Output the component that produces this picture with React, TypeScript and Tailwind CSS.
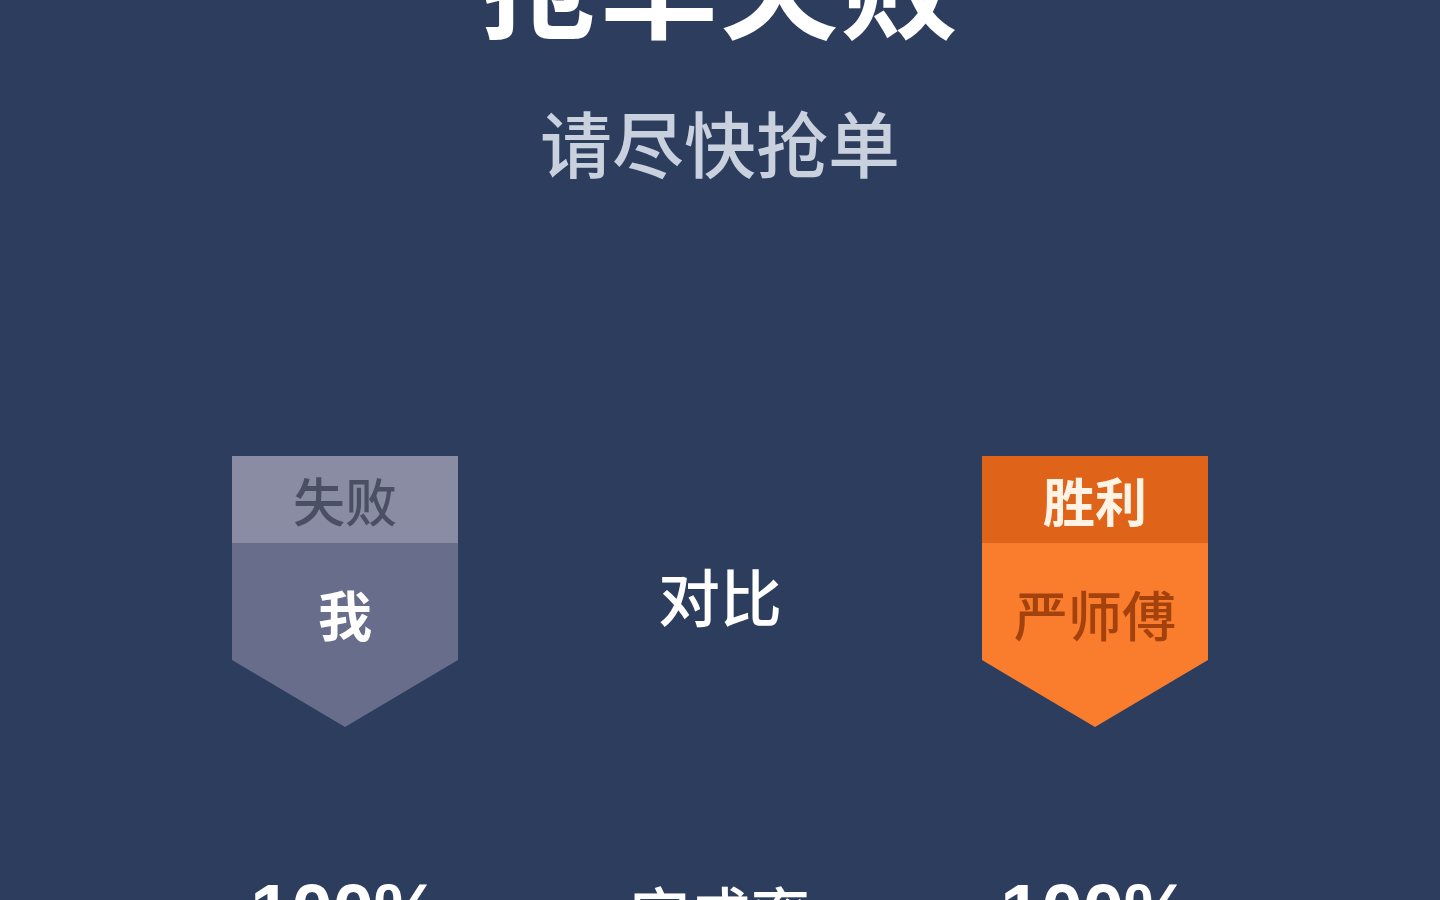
const FONT = '[font-family:"Noto_Sans_CJK_SC","Noto_Sans",sans-serif]'

interface BadgeProps {
  label: string
  name: string
  headClass: string
  bodyClass: string
  labelClass: string
  nameClass: string
}

function Badge({ label, name, headClass, bodyClass, labelClass, nameClass }: BadgeProps) {
  return (
    <div className="w-[226px] h-[271px] flex flex-col [clip-path:polygon(0_0,100%_0,100%_75.3%,50%_100%,0_75.3%)]">
      <div className={`h-[87px] flex items-center justify-center ${headClass}`}>
        <span className={`text-[52px] leading-none ${labelClass}`}>{label}</span>
      </div>
      <div className={`flex-1 flex justify-center pt-[44px] ${bodyClass}`}>
        <span className={`text-[54px] leading-none ${nameClass}`}>{name}</span>
      </div>
    </div>
  )
}

export default function App() {
  return (
    <div className={`h-[900px] w-full overflow-hidden bg-[#2d3d5e] flex flex-col items-center ${FONT}`}>
      {/* title, scrolled partly off the top */}
      <h1 className="-mt-[80px] text-[118px] leading-none font-bold text-white tracking-[2px]">抢单失败</h1>
      <p className="mt-[67px] text-[72px] leading-none text-[#c9d0de] font-medium">请尽快抢单</p>

      {/* comparison */}
      <div className="mt-[279px] flex items-center">
        <Badge
          label="失败"
          name="我"
          headClass="bg-[#8a8ca4]"
          bodyClass="bg-[#676d8b]"
          labelClass="text-[#4b4f63] font-medium"
          nameClass="text-white font-bold"
        />
        <div className="w-[524px] flex justify-center pt-[6px]">
          <span className="text-[62px] leading-none text-white font-medium">对比</span>
        </div>
        <Badge
          label="胜利"
          name="严师傅"
          headClass="bg-[#df6318]"
          bodyClass="bg-[#fa7d2e]"
          labelClass="text-[#fff3e6] font-bold"
          nameClass="text-[#a3420c] font-medium"
        />
      </div>

      {/* stats, cut off at the bottom */}
      <div className="mt-[147px] flex items-start">
        <div className="w-[226px] flex justify-center">
          <span className="text-[74px] leading-none font-bold text-white [font-family:'Liberation_Sans',sans-serif]">100%</span>
        </div>
        <div className="w-[524px] flex justify-center pt-[8px]">
          <span className="text-[60px] leading-none text-white font-medium">完成率</span>
        </div>
        <div className="w-[226px] flex justify-center">
          <span className="text-[74px] leading-none font-bold text-white [font-family:'Liberation_Sans',sans-serif]">100%</span>
        </div>
      </div>
    </div>
  )
}
